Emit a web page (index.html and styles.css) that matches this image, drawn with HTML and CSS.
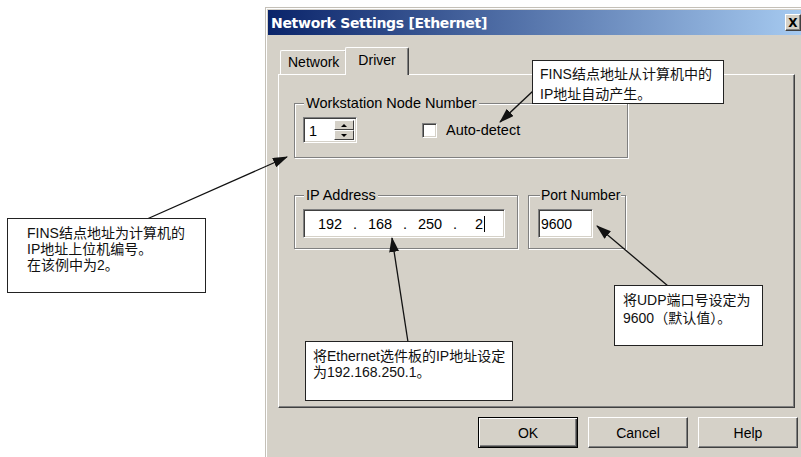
FILE: index.html
```html
<!DOCTYPE html>
<html lang="zh">

<head>
    <meta charset="UTF-8">
    <meta name="viewport" content="width=device-width, initial-scale=1.0">
    <title>Network Settings [Ethernet]</title>
    <link rel="stylesheet" href="styles.css">
</head>

<body>
    <div class="page">

        <div class="dialog">
            <div class="titlebar">
                <span class="title">Network Settings [Ethernet]</span>
                <span class="close">X</span>
            </div>

            <div class="content">
                <div class="tabs">
                    <div class="tab">Network</div>
                    <div class="tab active">Driver</div>
                </div>

                <div class="panel">
                    <fieldset class="group ws">
                        <legend>Workstation Node Number</legend>
                        <div class="line">
                            <div class="spin edit">
                                <span class="spin-val">1</span>
                                <span class="spin-btns">
                                    <span class="spin-btn up"></span>
                                    <span class="spin-btn down"></span>
                                </span>
                            </div>
                            <span class="check edit"></span>
                            <span class="check-label">Auto-detect</span>
                        </div>
                    </fieldset>

                    <div class="row">
                        <fieldset class="group ip">
                            <legend>IP Address</legend>
                            <div class="ipfield edit">
                                <span class="oct">192</span><span class="dot">.</span>
                                <span class="oct">168</span><span class="dot">.</span>
                                <span class="oct">250</span><span class="dot">.</span>
                                <span class="oct">2<span class="caret"></span></span>
                            </div>
                        </fieldset>
                        <fieldset class="group port">
                            <legend>Port Number</legend>
                            <div class="portfield edit">9600</div>
                        </fieldset>
                    </div>
                </div>

                <div class="buttons">
                    <button class="btn default">OK</button>
                    <button class="btn">Cancel</button>
                    <button class="btn">Help</button>
                </div>
            </div>
        </div>

        <!-- callout arrows -->
        <svg class="arrows" width="801" height="457" viewBox="0 0 801 457">
            <defs>
                <marker id="head" viewBox="0 0 15 10" refX="14" refY="5" markerWidth="15" markerHeight="10"
                    markerUnits="userSpaceOnUse" orient="auto">
                    <path d="M0 0L15 5L0 10z" fill="#111"/>
                </marker>
            </defs>
            <g stroke="#111" stroke-width="1.3">
                <line x1="533" y1="91" x2="500" y2="122" marker-end="url(#head)"/>
                <line x1="147" y1="219" x2="287" y2="157" marker-end="url(#head)"/>
                <line x1="408" y1="342" x2="392" y2="238" marker-end="url(#head)"/>
                <line x1="668" y1="286" x2="597" y2="226" marker-end="url(#head)"/>
            </g>
        </svg>

        <div class="note note-top">FINS结点地址从计算机中的<br>IP地址自动产生。</div>
        <div class="note note-left">FINS结点地址为计算机的<br>IP地址上位机编号。<br>在该例中为2。</div>
        <div class="note note-ip">将Ethernet选件板的IP地址设定<br>为192.168.250.1。</div>
        <div class="note note-port">将UDP端口号设定为<br>9600（默认值）。</div>

    </div>
</body>

</html>
```

FILE: styles.css
```css
body {
    margin: 0;
    background-color: #fff;
    font-family: "Liberation Sans", Arial, sans-serif;
}

.page {
    position: relative;
    width: 801px;
    height: 457px;
    overflow: hidden;
    box-sizing: border-box;
    padding: 7px 0 0 265px;
}

/* window */
.dialog {
    width: 540px;
    height: 470px;
    box-sizing: border-box;
    background-color: #d5d1c8;
    border: 1px solid #c4c0b8;
    box-shadow: inset 1px 1px 0 #fff;
    padding: 2px;
}

.titlebar {
    height: 25px;
    display: flex;
    align-items: center;
    justify-content: space-between;
    padding-left: 3px;
    background: linear-gradient(to right, #0a246a, #a6caf0);
}

.title {
    color: #fff;
    font-family: "DejaVu Sans", sans-serif;
    font-weight: bold;
    font-size: 14px;
    letter-spacing: -0.3px;
}

.close {
    width: 16px;
    height: 17px;
    box-sizing: border-box;
    margin-right: 1px;
    display: flex;
    align-items: center;
    justify-content: center;
    background-color: #d5d1c8;
    border: 1px solid;
    border-color: #fff #404040 #404040 #fff;
    box-shadow: inset -1px -1px 0 #808080;
    font-family: "DejaVu Sans", sans-serif;
    font-weight: bold;
    font-size: 12px;
}

.content {
    padding-left: 10px;
}

/* tabs */
.tabs {
    display: flex;
    align-items: flex-end;
    height: 27px;
    margin-top: 12px;
    padding-left: 2px;
    position: relative;
    z-index: 1;
}

.tab {
    height: 24px;
    box-sizing: border-box;
    padding: 0 7px;
    border: 1px solid;
    border-color: #fff #404040 transparent #fff;
    border-bottom: none;
    border-radius: 2px 2px 0 0;
    box-shadow: inset -1px 0 0 #808080;
    background-color: #d5d1c8;
    font-size: 14px;
    line-height: 22px;
}

.tab.active {
    height: 28px;
    margin-left: -2px;
    margin-bottom: -1px;
    padding: 0 12px;
    line-height: 24px;
}

.panel {
    width: 517px;
    height: 334px;
    box-sizing: border-box;
    border: 1px solid;
    border-color: #fff #404040 #404040 #fff;
    box-shadow: inset -1px -1px 0 #808080;
    padding: 21px 0 0 15px;
}

/* group boxes */
.group {
    margin: 0;
    min-width: 0;
    box-sizing: border-box;
    padding: 7px 0 14px 8px;
    border: 1px solid #808080;
    box-shadow: 1px 1px 0 #fff, inset 1px 1px 0 #fff;
}

.group legend {
    margin-left: 1px;
    padding: 0 2px;
    white-space: nowrap;
    font-size: 14.5px;
    line-height: 14px;
    background-color: #d5d1c8;
}

.ws {
    width: 334px;
}

.line {
    display: flex;
    align-items: center;
}

.row {
    display: flex;
    margin-top: 30px;
}

.ip {
    width: 224px;
    padding-bottom: 10px;
}

.port {
    width: 98px;
    margin-left: 10px;
    padding-left: 9px;
    padding-bottom: 10px;
}

.port legend {
    margin-left: 2px;
    padding: 0 1px;
    font-size: 14px;
}

/* sunken controls */
.edit {
    box-sizing: border-box;
    background-color: #fff;
    border: 1px solid;
    border-color: #808080 #fff #fff #808080;
    box-shadow: inset 1px 1px 0 #404040, inset -1px -1px 0 #d5d1c8;
}

.spin {
    display: flex;
    width: 54px;
    height: 26px;
    padding: 2px;
    font-size: 14.5px;
}

.spin-val {
    flex: 1;
    padding-left: 3px;
    line-height: 22px;
}

.spin-btns {
    width: 20px;
    display: flex;
    flex-direction: column;
}

.spin-btn {
    flex: 1;
    display: flex;
    align-items: center;
    justify-content: center;
    background-color: #d5d1c8;
    border: 1px solid;
    border-color: #fff #404040 #404040 #fff;
}

.spin-btn::after {
    content: "";
    border-left: 3px solid transparent;
    border-right: 3px solid transparent;
}

.spin-btn.up::after {
    border-bottom: 3px solid #000;
}

.spin-btn.down::after {
    border-top: 3px solid #000;
}

.check {
    width: 15px;
    height: 15px;
    margin-left: 65px;
}

.check-label {
    margin-left: 9px;
    font-size: 14.5px;
}

.ipfield {
    width: 202px;
    height: 29px;
    display: flex;
    align-items: center;
    padding-left: 6px;
    font-size: 14.5px;
}

.oct {
    width: 40px;
    text-align: center;
}

.dot {
    width: 10px;
    text-align: center;
}

.caret {
    display: inline-block;
    width: 1px;
    height: 16px;
    margin-left: 1px;
    vertical-align: -3px;
    background-color: #000;
}

.portfield {
    width: 55px;
    height: 29px;
    display: flex;
    align-items: center;
    padding-left: 2px;
    font-size: 14px;
}

/* buttons */
.buttons {
    display: flex;
    justify-content: flex-end;
    gap: 10px;
    margin-top: 9px;
    padding-right: 4px;
}

.btn {
    width: 100px;
    height: 31px;
    padding: 0;
    box-sizing: border-box;
    background-color: #d5d1c8;
    border: 1px solid;
    border-color: #fff #404040 #404040 #fff;
    box-shadow: inset -1px -1px 0 #808080;
    font-family: "Liberation Sans", Arial, sans-serif;
    font-size: 14px;
    color: #000;
}

.btn.default {
    border-color: #000;
    box-shadow: inset 1px 1px 0 #fff, inset -1px -1px 0 #404040, inset -2px -2px 0 #808080;
}

/* annotations */
.arrows {
    position: absolute;
    left: 0;
    top: 0;
}

.note {
    position: absolute;
    box-sizing: border-box;
    background-color: #fff;
    border: 1px solid #222;
    white-space: nowrap;
    font-family: "Liberation Sans", "Noto Sans CJK SC", sans-serif;
    font-size: 14px;
    color: #111;
}

.note-top {
    left: 532px;
    top: 60px;
    width: 192px;
    height: 44px;
    padding: 3px 0 0 7px;
    line-height: 20px;
}

.note-left {
    left: 7px;
    top: 218px;
    width: 199px;
    height: 75px;
    padding: 6px 0 0 19px;
    line-height: 16px;
}

.note-ip {
    left: 305px;
    top: 341px;
    width: 208px;
    height: 60px;
    padding: 6px 0 0 7px;
    line-height: 16px;
}

.note-port {
    left: 614px;
    top: 285px;
    width: 149px;
    height: 61px;
    padding: 5px 0 0 8px;
    line-height: 18px;
}
```
